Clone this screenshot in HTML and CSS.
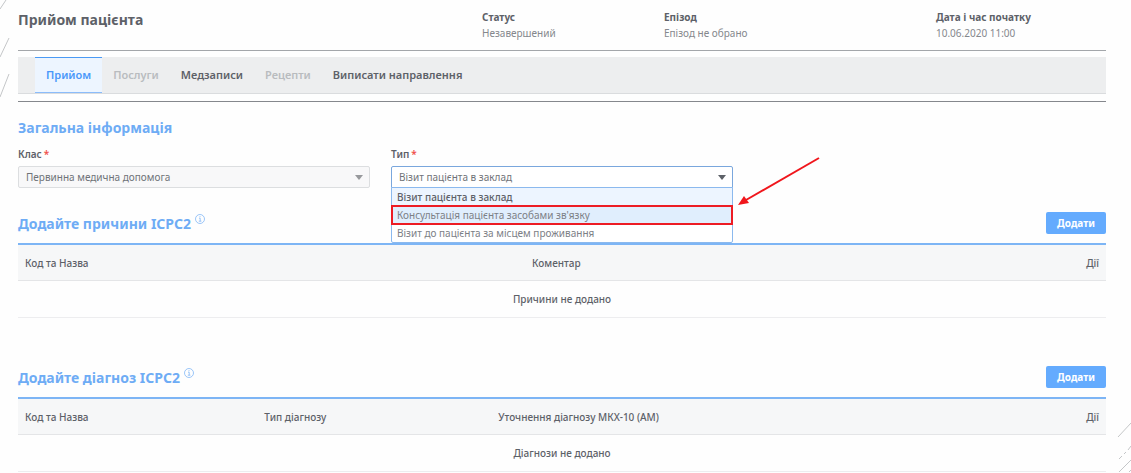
FILE: index.html
```html
<!DOCTYPE html>
<html lang="uk">
<head>
<meta charset="utf-8">
<meta name="viewport" content="width=device-width, initial-scale=1">
<title>Прийом пацієнта</title>
<link rel="stylesheet" href="styles.css">
</head>
<body>
<svg class="decor decor-left" width="12" height="100" viewBox="0 0 12 100" aria-hidden="true">
  <path d="M0 9L6 0M0 57L9 38M0 97L9 74"/>
</svg>
<svg class="decor decor-right" width="14" height="52" viewBox="0 0 14 52" aria-hidden="true">
  <path d="M1 16L14 2M2 38l3-3M7 33l2-2M11 29l3-4M1 52L14 39M11 52l3-3"/>
</svg>
<main class="page">
  <header class="visit">
    <h1 class="visit-title">Прийом пацієнта</h1>
    <div class="fact"><b class="fact-name">Статус</b><span>Незавершений</span></div>
    <div class="fact"><b class="fact-name">Епізод</b><span>Епізод не обрано</span></div>
    <div class="fact"><b class="fact-name">Дата і час початку</b><span>10.06.2020 11:00</span></div>
  </header>

  <div class="tabs-wrap">
    <nav class="tabs">
      <button class="tab tab-active" type="button">Прийом</button>
      <button class="tab" type="button" disabled>Послуги</button>
      <button class="tab" type="button">Медзаписи</button>
      <button class="tab" type="button" disabled>Рецепти</button>
      <button class="tab" type="button">Виписати направлення</button>
    </nav>
  </div>

  <section class="general">
    <h2 class="heading">Загальна інформація</h2>
    <div class="fields">
      <div class="field">
        <label class="label" for="class">Клас<span class="required">*</span></label>
        <div class="control">
          <select class="select" id="class" disabled><option>Первинна медична допомога</option></select>
          <svg class="caret" width="8" height="5" viewBox="0 0 8 5" aria-hidden="true"><path d="M0 0h8L4 5z"/></svg>
        </div>
      </div>
      <div class="field">
        <label class="label" for="type">Тип<span class="required">*</span></label>
        <div class="control">
          <select class="select select-open" id="type"><option>Візит пацієнта в заклад</option><option>Консультація пацієнта засобами зв'язку</option><option>Візит до пацієнта за місцем проживання</option></select>
          <svg class="caret" width="8" height="5" viewBox="0 0 8 5" aria-hidden="true"><path d="M0 0h8L4 5z"/></svg>
          <ul class="menu" role="listbox" aria-label="Тип">
            <li class="option option-selected" role="option" aria-selected="true">Візит пацієнта в заклад</li>
            <li class="option option-marked" role="option">Консультація пацієнта засобами зв'язку</li>
            <li class="option" role="option">Візит до пацієнта за місцем проживання</li>
          </ul>
          <svg class="arrow" width="84" height="52" viewBox="0 0 84 52" aria-hidden="true">
            <path class="arrow-line" d="M82 2L9 44"/><path class="arrow-head" d="M1 49L7 40L12 47z"/>
          </svg>
        </div>
      </div>
    </div>
  </section>

  <section class="block">
    <div class="block-head">
      <h2 class="heading">Додайте причини ICPC2
        <svg class="info" width="10" height="10" viewBox="0 0 10 10" aria-hidden="true"><circle cx="5" cy="5" r="4.5"/><path d="M4 4.2h1.2v3M3.8 7.2h2.6M5 2.2v1"/></svg>
      </h2>
      <button class="add" type="button">Додати</button>
    </div>
    <table class="table">
      <colgroup><col class="col-wide"><col><col class="col-actions"></colgroup>
      <thead><tr><th>Код та Назва</th><th>Коментар</th><th class="actions">Дії</th></tr></thead>
      <tbody><tr><td colspan="3">Причини не додано</td></tr></tbody>
    </table>
  </section>

  <section class="block">
    <div class="block-head">
      <h2 class="heading">Додайте діагноз ICPC2
        <svg class="info" width="10" height="10" viewBox="0 0 10 10" aria-hidden="true"><circle cx="5" cy="5" r="4.5"/><path d="M4 4.2h1.2v3M3.8 7.2h2.6M5 2.2v1"/></svg>
      </h2>
      <button class="add" type="button">Додати</button>
    </div>
    <table class="table">
      <colgroup><col class="col-code"><col class="col-kind"><col><col class="col-actions"></colgroup>
      <thead><tr><th>Код та Назва</th><th>Тип діагнозу</th><th>Уточнення діагнозу МКХ-10 (АМ)</th><th class="actions">Дії</th></tr></thead>
      <tbody><tr><td colspan="4">Діагнози не додано</td></tr></tbody>
    </table>
  </section>
</main>
</body>
</html>
```
FILE: styles.css
```css
* { box-sizing: border-box; }
body {
  margin: 0;
  position: relative;
  background: #fefefe;
  color: #5d6168;
  font: 10px/16px "Noto Sans", "Open Sans", sans-serif;
}
h1, h2, ul { margin: 0; padding: 0; }
button, select { font: inherit; color: inherit; }

.page { padding: 0 25px 0 18px; }
.decor { position: absolute; fill: none; stroke: #c4c6c8; }
.decor-left { top: 0; left: 0; }
.decor-right { right: 0; top: 421px; }

.visit {
  display: grid;
  grid-template-columns: 464fr 182fr 272fr 170fr;
  padding: 9px 0;
  border-bottom: 1px solid #a3a6aa;
}
.visit-title { font-size: 14px; line-height: 22px; font-weight: 700; }
.fact { display: flex; flex-direction: column; color: #85888d; }
.fact-name { color: #5d6168; font-weight: 700; }

.tabs-wrap { padding: 6px 0 7px; border-bottom: 1px solid #85888d; }
.tabs {
  display: flex;
  padding-left: 17px;
  background: #edeeef;
  border-bottom: 1px solid #dadcde;
}
.tab {
  height: 36px;
  padding: 0 11px;
  border: 0;
  background: none;
  font-size: 11px;
  font-weight: 600;
}
.tab:disabled { color: #b9bcbf; }
.tab-active {
  background: #edf5ff;
  border-top: 1px solid #4a9af5;
  border-bottom: 1px solid #8bbcfa;
  color: #4a98fa;
}

.heading { color: #6eacf5; font-size: 14px; line-height: 20px; font-weight: 700; }
.general { padding-top: 16px; }
.fields {
  display: grid;
  grid-template-columns: 352fr 342fr 352fr;
  column-gap: 21px;
  padding-top: 8px;
}
.field { display: flex; flex-direction: column; gap: 4px; }
.label { font-weight: 600; }
.required { color: #f0504a; margin-left: 2px; }
.control { position: relative; display: flex; }
.select {
  appearance: none;
  width: 100%;
  height: 22px;
  padding: 0 24px 0 7px;
  border: 1px solid #cccfd2;
  border-radius: 2px;
  background: #fff;
  color: #6f7378;
}
.select:disabled { background: #f8f8f9; border-color: #dcdee0; opacity: 1; }
.select-open { border-color: #7aa7dd; border-radius: 2px 2px 0 0; }
.caret { position: absolute; right: 7px; top: 9px; fill: #5d6168; pointer-events: none; }
.select:disabled + .caret { fill: #97999c; }
.menu {
  position: absolute;
  z-index: 1;
  top: 21px;
  left: 0;
  right: 0;
  list-style: none;
  background: #fff;
  border: 1px solid #8bb9ee;
  border-radius: 0 0 2px 2px;
}
.option { padding: 0 5px; line-height: 18px; color: #7c8086; }
.option-selected { background: #edf5ff; color: #5d6168; font-weight: 500; }
.option-marked { background: #e0eefd; outline: 2px solid #ed1c24; outline-offset: -1px; }
.arrow { position: absolute; left: calc(100% + 4px); top: -10px; }
.arrow-line { stroke: #f0161c; stroke-width: 2; }
.arrow-head { fill: #f0161c; }

.block { padding-top: 24px; }
.block + .block { padding-top: 48px; }
.block-head { display: flex; justify-content: space-between; align-items: flex-end; padding-bottom: 9px; }
.info { vertical-align: 5px; fill: none; stroke: #82b7f6; stroke-width: 0.8; }
.add {
  height: 22px;
  padding: 0 11px;
  border: 0;
  border-radius: 2px;
  background: #64abfe;
  color: #fff;
  font-weight: 700;
}
.table {
  width: 100%;
  table-layout: fixed;
  border-collapse: separate;
  border-spacing: 0;
  border-top: 2px solid #7db5f5;
}
.table th {
  height: 36px;
  padding: 0 7px;
  background: #f6f7f8;
  border-bottom: 1px solid #e4e5e7;
  text-align: left;
  font-weight: 500;
}
.table .actions { text-align: right; }
.table td {
  height: 37px;
  padding: 0 7px;
  border-bottom: 1px solid #ededef;
  text-align: center;
  font-weight: 500;
}
.col-wide { width: 46.6%; }
.col-code { width: 22%; }
.col-kind { width: 21.5%; }
.col-actions { width: 8%; }
```
